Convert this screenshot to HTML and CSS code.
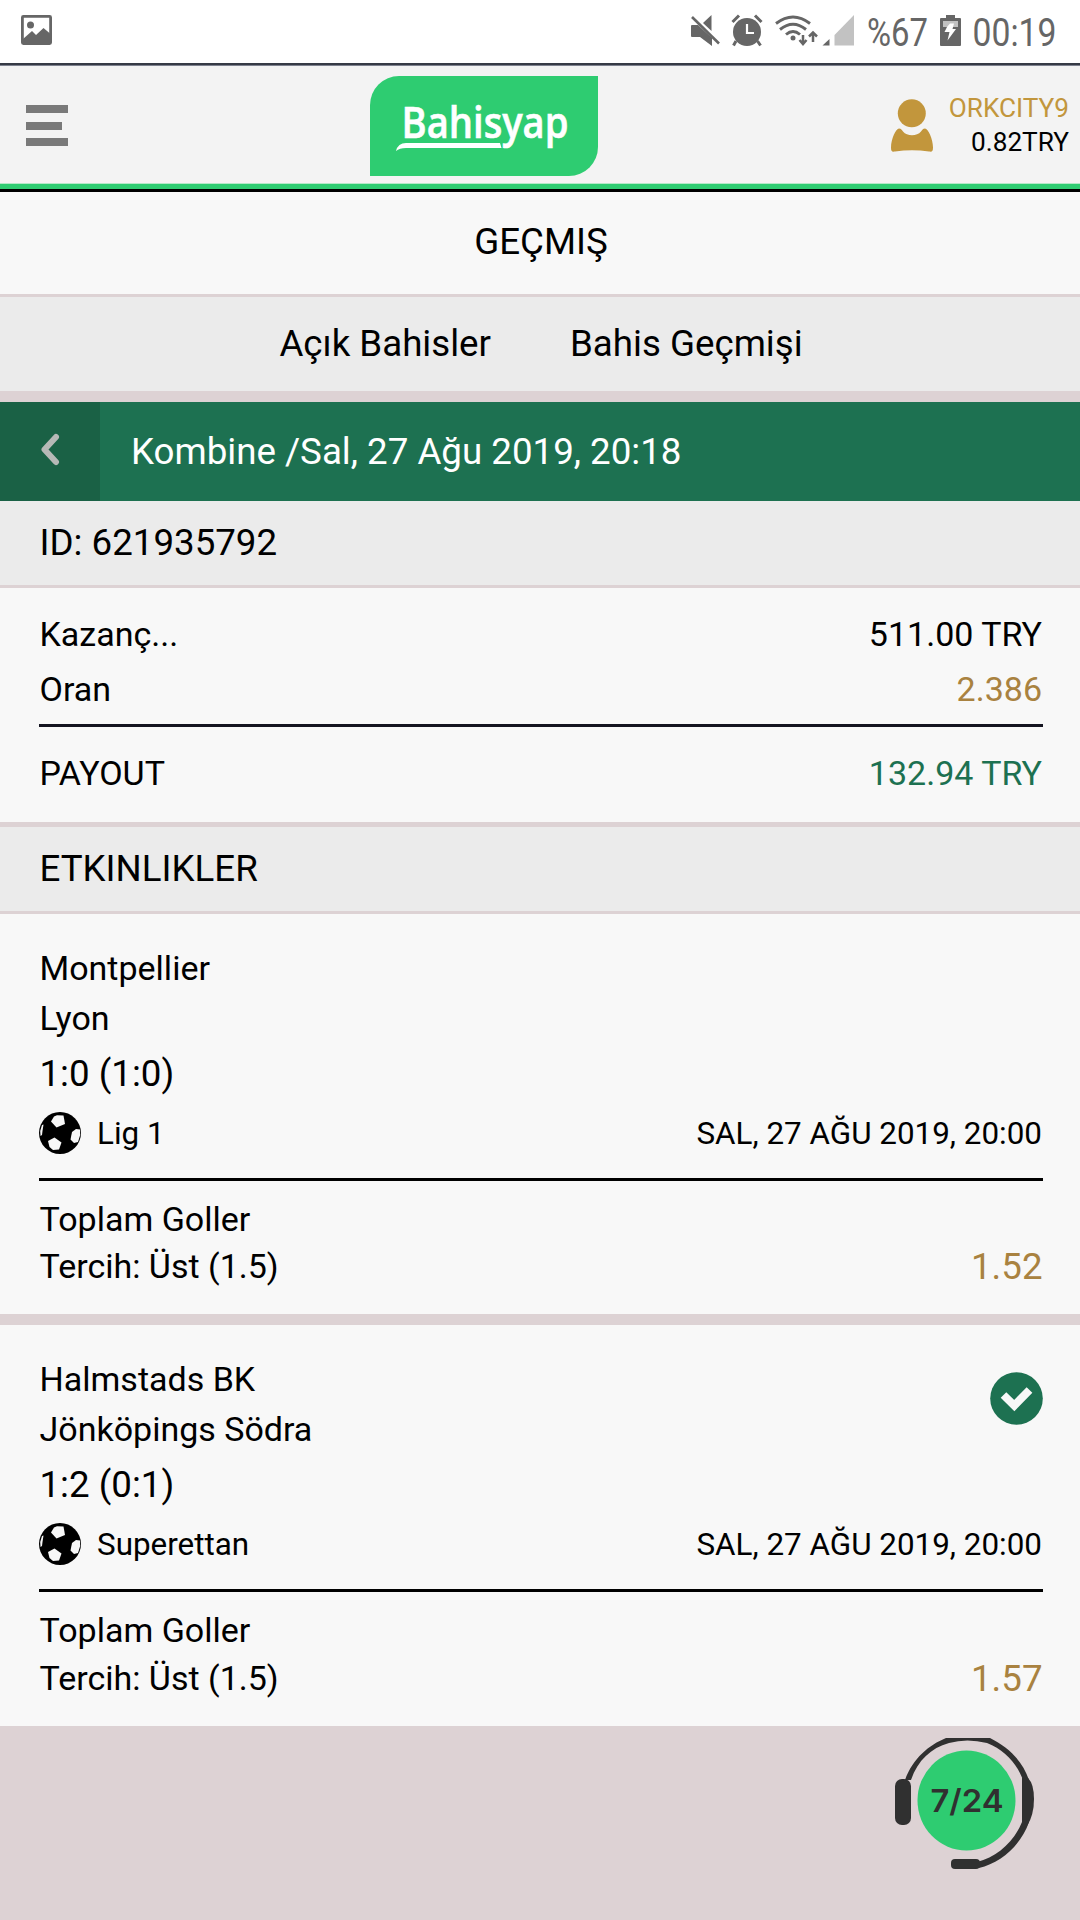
FILE: index.html
```html
<!DOCTYPE html>
<html lang="tr">
<head>
<meta charset="utf-8">
<title>Bahisyap</title>
<link rel="stylesheet" href="styles.css">
</head>
<body>
<svg class="defs" width="0" height="0">
  <symbol id="ball" viewBox="0 0 42 42">
    <circle cx="21" cy="21" r="21" fill="#000"/>
    <g fill="#f8f8f8">
      <path d="M15 4.500L18 3.200L24.500 3.500L26 12L17.500 15.500L12 9.500Z"/>
      <path d="M9 29L15.500 25.500L22.500 30.500L20 37.500L14 38L10.500 35Z"/>
      <path d="M33 20L37 17L41 17.500L41.200 23L39 30L35 31L31.500 27.500Z"/>
      <path d="M3 13L4.500 12.500L3.500 19L3 23L1.500 24L1.200 19Z"/>
    </g>
  </symbol>
</svg>

<div class="status">
  <svg class="pic" width="31" height="30" viewBox="0 0 31 30"><rect x="1.400" y="1.400" width="28.200" height="27.200" rx="1" fill="none" stroke="#666" stroke-width="2.800"/><circle cx="9.500" cy="10" r="3.500" fill="#666"/><path d="M2 24L11 16L15 20L22.500 13L29 18.500V28H2Z" fill="#666"/></svg>
  <div class="status-right">
    <svg class="sys" width="168" height="34" viewBox="0 0 168 34">
      <g fill="#666">
        <path d="M1 12Q1 11 2 11H8L22 24V32L10 23H2Q1 23 1 22ZM13 9L21.500 1V17Z"/>
        <path d="M2 3L29 29.500" stroke="#666" stroke-width="2.600"/>
        <circle cx="57" cy="18" r="14"/>
        <path d="M42.500 8L49 1.500M65 1.500L71.500 8M46 27L43.500 31.500M67.500 27L70.500 31.500" stroke="#666" stroke-width="3"/>
        <path d="M57 10V19H64" fill="none" stroke="#fff" stroke-width="2.200"/>
        <g fill="none" stroke="#666" stroke-width="2.900"><path d="M86 9.500Q103 -3.500 120 9.500M90 15.500Q103 5 116 15.500M96 20.500Q103 14.500 110 20.500"/></g>
        <circle cx="103" cy="24" r="2.500"/>
        <path d="M113 21V30M109.500 26L113 30L116.500 26M123 28V19M119 22.500L123 18.500L127 22.500" fill="none" stroke="#666" stroke-width="2.500"/>
        <path d="M132.500 31.500L139.500 25V31.500Z"/>
      </g>
      <path d="M144.500 31.500V21L164 1V31.500Z" fill="#c2c2c2"/>
    </svg>
    <svg class="clock" width="190" height="40" viewBox="0 0 190 40">
      <text x="0" y="31.500" textLength="61" lengthAdjust="spacingAndGlyphs">%67</text>
      <path d="M73 5Q73 4 74 4H79V1H88V4H93Q94 4 94 5V31Q94 32 93 32H74Q73 32 73 31Z" fill="#666"/>
      <path d="M76 7H91V13H76Z" fill="#c2c2c2"/>
      <path d="M83 9.500H87L85.500 15H89L80.500 26.500L82.500 18H77.500L80 13Z" fill="#fff"/>
      <text x="105.500" y="31.500" textLength="84" lengthAdjust="spacingAndGlyphs">00:19</text>
    </svg>
  </div>
</div>

<header class="header">
  <div class="menu"><i></i><i></i><i></i></div>
  <div class="logo">
    <svg width="228" height="100" viewBox="0 0 228 100">
      <text x="31.500" y="61.500" textLength="167" lengthAdjust="spacingAndGlyphs">Bahisyap</text>
      <path d="M26 75Q28 67 36 67H130L131.500 72H38Q30 71.500 26 75Z" fill="#fff"/>
    </svg>
  </div>
  <div class="user">
    <svg width="42" height="53" viewBox="0 0 42 53" fill="#c2963c"><circle cx="20.800" cy="14.300" r="14"/><path d="M8 29.500C10 29.500 11 31 12 32.500C16 37.500 26 37.500 30 32.500C31 31 32 29.500 34 29.500C37 29.500 42 40 42 48.500C42 52.500 41 53 38 52.500Q21 50 4 52.500C1 53 0 52.500 0 48.500C0 40 5 29.500 8 29.500Z"/></svg>
    <div class="user-text"><span class="name">ORKCITY9</span><span>0.82TRY</span></div>
  </div>
</header>

<h1 class="title">GEÇMIŞ</h1>
<nav class="tabs"><span>Açık Bahisler</span><span>Bahis Geçmişi</span></nav>

<div class="bet-head">
  <div class="back"><svg width="20" height="34" viewBox="0 0 20 34"><path d="M16 4L4.500 16.500L16 29" fill="none" stroke="#b6b9b6" stroke-width="6" stroke-linecap="round" stroke-linejoin="round"/></svg></div>
  <span>Kombine /Sal, 27 Ağu 2019, 20:18</span>
</div>
<div class="band">ID: 621935792</div>

<section class="summary">
  <div class="row"><span>Kazanç...</span><span>511.00 TRY</span></div>
  <div class="row odds"><span>Oran</span><span class="gold">2.386</span></div>
  <div class="row payout"><span>PAYOUT</span><span class="green">132.94 TRY</span></div>
</section>

<div class="band section">ETKINLIKLER</div>

<article class="event">
  <div class="teams"><div><p>Montpellier</p><p>Lyon</p></div></div>
  <p class="score">1:0 (1:0)</p>
  <div class="league"><svg width="42" height="42"><use href="#ball"/></svg><span>Lig 1</span><time>SAL, 27 AĞU 2019, 20:00</time></div>
  <div class="pick"><div><p>Toplam Goller</p><p>Tercih: Üst (1.5)</p></div><span class="gold">1.52</span></div>
</article>

<article class="event last">
  <div class="teams"><div><p>Halmstads BK</p><p>Jönköpings Södra</p></div>
    <svg class="won" width="53" height="53" viewBox="0 0 53 53"><circle cx="26.500" cy="26.500" r="26.300" fill="#1d7151"/><path d="M13.500 23L24.300 33.500L39.500 18" fill="none" stroke="#f8f8f8" stroke-width="8"/></svg></div>
  <p class="score">1:2 (0:1)</p>
  <div class="league"><svg width="42" height="42"><use href="#ball"/></svg><span>Superettan</span><time>SAL, 27 AĞU 2019, 20:00</time></div>
  <div class="pick"><div><p>Toplam Goller</p><p>Tercih: Üst (1.5)</p></div><span class="gold">1.57</span></div>
</article>

<div class="support">
  <svg width="142" height="134" viewBox="0 0 142 134">
    <g fill="#303030">
      <path d="M10 42C18 20 34 7 51 0H95C113 9 127 22 134 42H128C122 26 110 12 92 5Q72 0 54 5C36 10 23 22 16 42Z"/>
      <path d="M134 84C126 107 106 125 84 130L82 124C102 119 119 104 127 84Z"/>
      <rect x="0" y="41" width="16" height="46" rx="7"/>
      <path d="M127 40H133Q139 46 139 61Q139 77 132 88L127 90Z"/>
      <rect x="56" y="121" width="29" height="10" rx="4"/>
    </g>
    <ellipse cx="71.500" cy="62.500" rx="49" ry="50" fill="#2ecc71"/>
    <text x="35.500" y="73.500" textLength="73" lengthAdjust="spacingAndGlyphs">7/24</text>
  </svg>
</div>
</body>
</html>
```
FILE: styles.css
```css
* { box-sizing: border-box; }
body { margin: 0; width: 1080px; height: 1920px; overflow: hidden; background: #ddd2d4; color: #000; font-family: Roboto, sans-serif; font-size: 34px; }
p, h1 { margin: 0; font-weight: 400; }
svg { display: block; flex: none; }
.defs { position: absolute; }
.gold { color: #a98240; }
.green { color: #1d7151; }

.status { height: 66px; display: flex; justify-content: space-between; padding: 15px 23px 0 21px; background: #fff; border-bottom: 1px solid #7d818e; box-shadow: inset 0 -2px #363a45; }
.status-right { display: flex; gap: 9px; }
.sys { margin-top: -1px; }
.clock { margin-top: -1px; overflow: visible; }
.clock text { font-size: 38.500px; fill: #666; }

.header { height: 126px; display: flex; align-items: flex-start; background: #f3f3f3; border-bottom: 3px solid #000; box-shadow: inset 0 -5px #2ecc71, inset 0 -6px #b5e8c8; }
.menu { width: 370px; padding: 39px 0 0 26px; display: grid; gap: 8.500px; }
.menu i { width: 42px; height: 8px; background: #797979; }
.menu i:nth-child(2) { width: 36px; }
.logo { width: 228px; height: 100px; margin-top: 10px; background: #2ecc71; border-radius: 29px 0 29px 0; }
.logo text { font-family: "Open Sans", sans-serif; font-weight: 600; font-size: 44px; fill: #fff; stroke: #fff; stroke-width: 0.600px; }
.user { flex: 1; display: flex; justify-content: flex-end; gap: 16px; padding: 33px 11px 0 0; }
.user-text { display: flex; flex-direction: column; align-items: flex-end; font-size: 26.200px; line-height: 34px; margin-top: -8px; }
.name { color: #c2963c; }

.title { height: 105px; line-height: 100px; padding-left: 2px; font-size: 36.700px; text-align: center; background: #f8f8f8; border-bottom: 3px solid #ddd2d4; }
.tabs { height: 105px; display: flex; justify-content: center; gap: 79px; padding-left: 2px; line-height: 94px; font-size: 36.700px; background: #ebebeb; border-bottom: 11px solid #ddd2d4; }
.bet-head { height: 99px; display: flex; gap: 31px; align-items: center; line-height: 98px; font-size: 36.700px; background: #1d7151; color: #fff; }
.back { width: 100px; height: 99px; padding: 31px 0 0 40px; background: #1a6145; }
.band { height: 87px; line-height: 84px; font-size: 36.700px; padding-left: 39.500px; background: #ebebeb; border-bottom: 3px solid #ddd2d4; }
.section { height: 92px; border-top: 5px solid #ddd2d4; }

.summary { height: 234px; padding: 19px 37px 0 39px; background: #f8f8f8; }
.row { display: flex; justify-content: space-between; line-height: 55px; padding: 0 1px 0 0.500px; }
.odds { height: 65px; border-bottom: 3px solid #141420; }
.payout { padding-top: 19px; }

.event { height: 411px; padding: 29px 37px 0 39px; background: #f8f8f8; border-bottom: 11px solid #ddd2d4; }
.last { height: 412px; }
.last .pick { line-height: 47.500px; }
.teams { display: flex; justify-content: space-between; line-height: 50px; padding-left: 0.500px; }
.won { margin-top: 18px; }
.score { font-size: 36.700px; line-height: 61px; padding-left: 0.500px; }
.league { height: 77px; display: flex; align-items: flex-start; padding-top: 8px; gap: 16px; font-size: 31.400px; line-height: 43px; border-bottom: 3px solid #000; }
.league time { margin-left: auto; padding-right: 1px; }
.pick { display: flex; justify-content: space-between; align-items: flex-end; padding: 15px 0.500px 0; line-height: 47px; }
.pick .gold { font-size: 36.700px; }

.support { display: flex; justify-content: flex-end; padding: 1px 43px 0 0; }
.support text { font-family: Inter, sans-serif; font-weight: 600; font-size: 31.500px; fill: #303030; }
```
